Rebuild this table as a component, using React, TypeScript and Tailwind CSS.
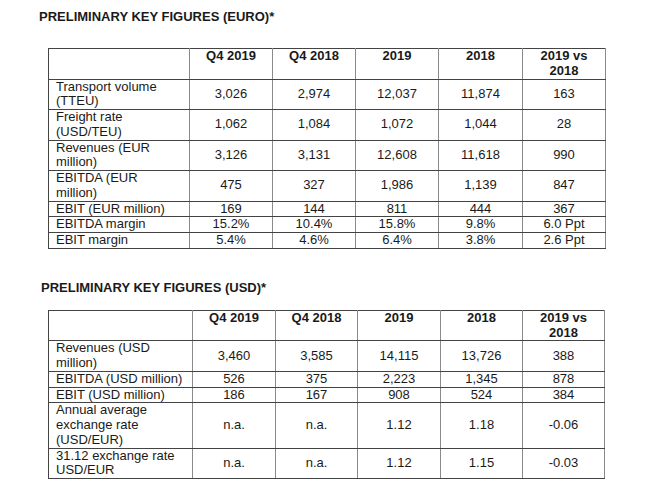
type Row = { label: string[]; values: string[] };

const euroRows: Row[] = [
  { label: ['Transport volume', '(TTEU)'], values: ['3,026', '2,974', '12,037', '11,874', '163'] },
  { label: ['Freight rate', '(USD/TEU)'], values: ['1,062', '1,084', '1,072', '1,044', '28'] },
  { label: ['Revenues (EUR', 'million)'], values: ['3,126', '3,131', '12,608', '11,618', '990'] },
  { label: ['EBITDA (EUR', 'million)'], values: ['475', '327', '1,986', '1,139', '847'] },
  { label: ['EBIT (EUR million)'], values: ['169', '144', '811', '444', '367'] },
  { label: ['EBITDA margin'], values: ['15.2%', '10.4%', '15.8%', '9.8%', '6.0 Ppt'] },
  { label: ['EBIT margin'], values: ['5.4%', '4.6%', '6.4%', '3.8%', '2.6 Ppt'] },
];

const usdRows: Row[] = [
  { label: ['Revenues (USD', 'million)'], values: ['3,460', '3,585', '14,115', '13,726', '388'] },
  { label: ['EBITDA (USD million)'], values: ['526', '375', '2,223', '1,345', '878'] },
  { label: ['EBIT (USD million)'], values: ['186', '167', '908', '524', '384'] },
  { label: ['Annual average', 'exchange rate', '(USD/EUR)'], values: ['n.a.', 'n.a.', '1.12', '1.18', '-0.06'] },
  { label: ['31.12 exchange rate', 'USD/EUR'], values: ['n.a.', 'n.a.', '1.12', '1.15', '-0.03'] },
];

const headers = [['Q4 2019'], ['Q4 2018'], ['2019'], ['2018'], ['2019 vs', '2018']];

const FigureTable = ({ rows, widths }: { rows: Row[]; widths: number[] }) => {
  const total = widths.reduce((a, b) => a + b, 0);
  return (
    <table className="table-fixed border-collapse border border-[#444]" style={{ width: total }}>
      <colgroup>
        {widths.map((w, i) => (
          <col key={i} style={{ width: w }} />
        ))}
      </colgroup>
      <thead>
        <tr>
          <th className="border-y border-r border-[#444] border-r-[#8a8a8a] p-0" />
          {headers.map((h, i) => (
            <th
              key={i}
              className="border-y border-r border-[#444] border-r-[#8a8a8a] p-0 align-top text-center font-bold"
            >
              {h.map((line) => (
                <div key={line}>{line}</div>
              ))}
            </th>
          ))}
        </tr>
      </thead>
      <tbody>
        {rows.map((row, i) => (
          <tr key={i}>
            <td className="border-y border-r border-[#444] border-r-[#8a8a8a] py-0 pl-[7px] pr-0 text-left align-top">
              {row.label.map((line) => (
                <div key={line}>{line}</div>
              ))}
            </td>
            {row.values.map((v, j) => (
              <td
                key={j}
                className="border-y border-r border-[#444] border-r-[#8a8a8a] p-0 text-center align-middle"
              >
                {v}
              </td>
            ))}
          </tr>
        ))}
      </tbody>
    </table>
  );
};

export default function App() {
  return (
    <div className="w-[650px] h-[488px] bg-white overflow-hidden font-['Liberation_Sans',Arial,sans-serif] text-[13px] leading-[14.75px] text-[#1a1a1a]">
      <div className="flex flex-col pt-[9px]">
        <h2 className="pl-[39px] font-bold text-[13px] leading-[15px]">PRELIMINARY KEY FIGURES (EURO)*</h2>
        <div className="pl-[48px] mt-[24px]">
          <FigureTable rows={euroRows} widths={[141, 83, 83, 83, 84, 83]} />
        </div>
        <h2 className="pl-[41px] mt-[31px] font-bold text-[13px] leading-[15px]">PRELIMINARY KEY FIGURES (USD)*</h2>
        <div className="pl-[48px] mt-[15px]">
          <FigureTable rows={usdRows} widths={[144, 83, 82, 83, 82, 82]} />
        </div>
      </div>
    </div>
  );
}
